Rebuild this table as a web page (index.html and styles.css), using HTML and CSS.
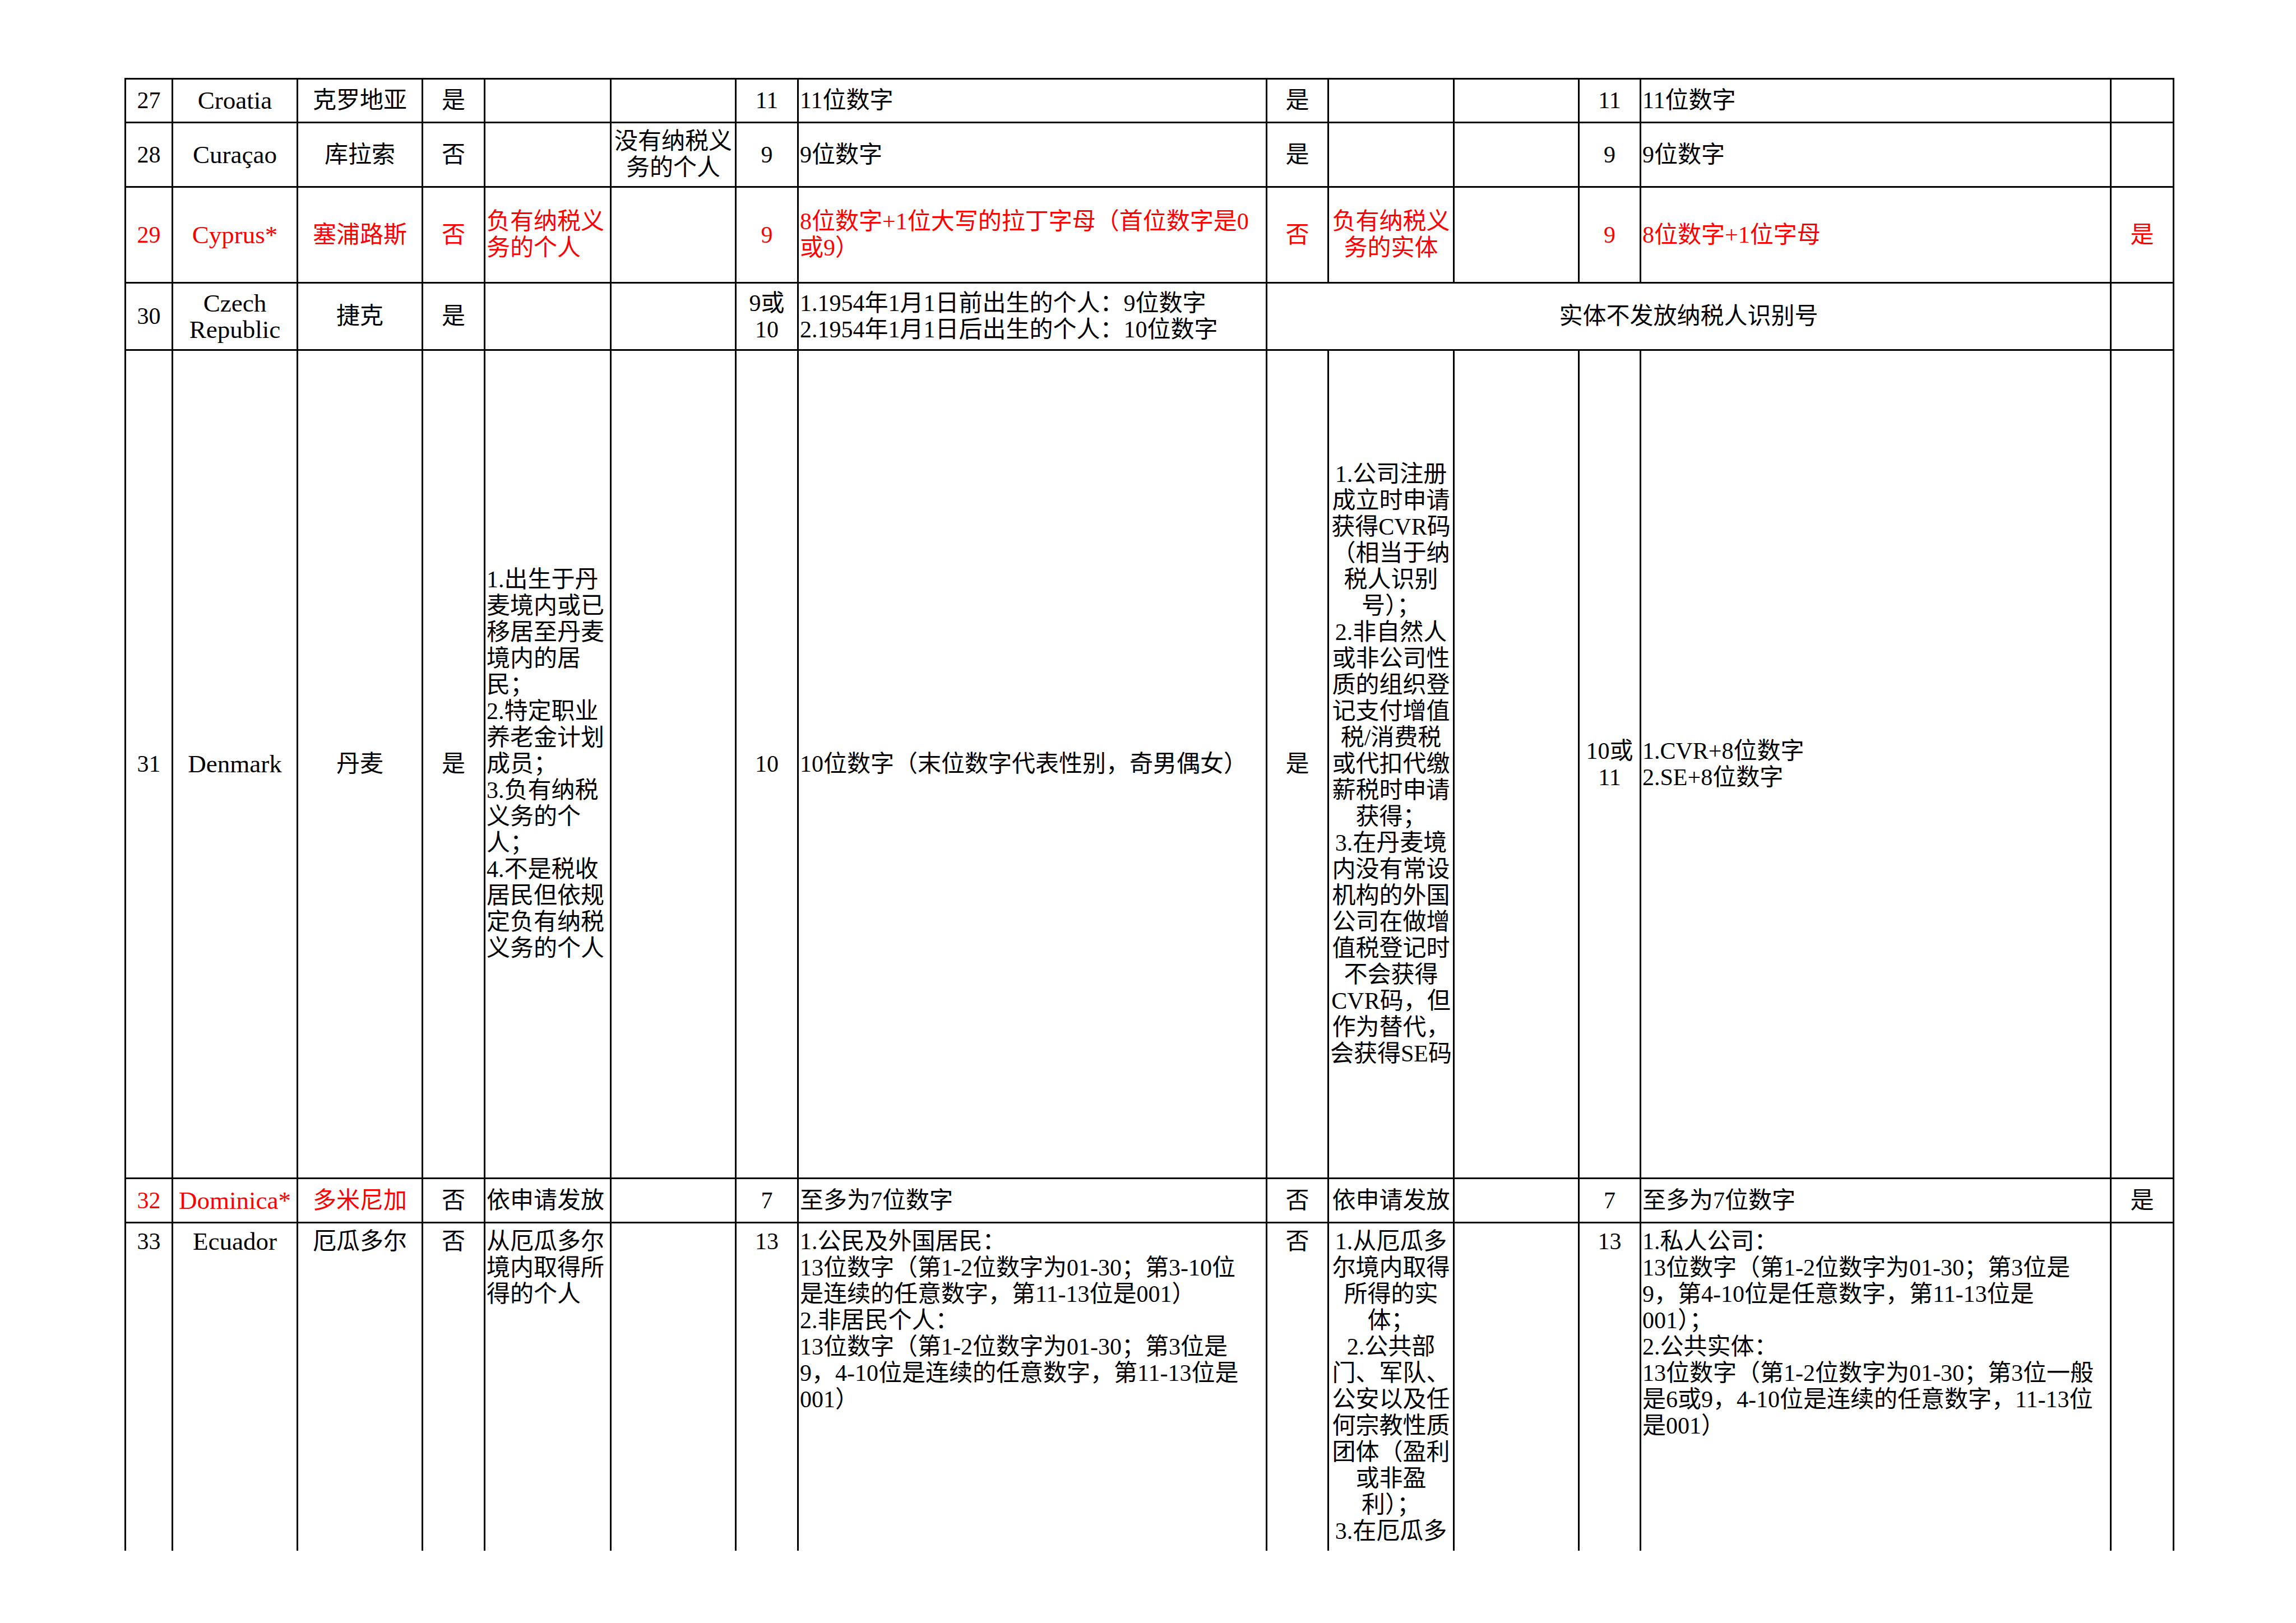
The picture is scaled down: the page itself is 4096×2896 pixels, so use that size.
FILE: index.html
```html
<!DOCTYPE html>
<html lang="zh-CN">
<head>
<meta charset="utf-8">
<title>纳税人识别号</title>
<link rel="stylesheet" href="styles.css">
</head>
<body>
<div class="page">
<table class="sheet">
<colgroup>
<col class="w-no"><col class="w-en"><col class="w-cn"><col class="w-yn"><col class="w-desc"><col class="w-desc2"><col class="w-len"><col class="w-fmt"><col class="w-yn2"><col class="w-desc3"><col class="w-desc4"><col class="w-len2"><col class="w-fmt2"><col class="w-end">
</colgroup>
<tbody>
<tr class="r27">
<td class="c">27</td><td class="c en">Croatia</td><td class="c">克罗地亚</td><td class="c">是</td><td></td><td></td><td class="c">11</td><td class="l">11位数字</td><td class="c">是</td><td></td><td></td><td class="c">11</td><td class="l">11位数字</td><td></td>
</tr>
<tr class="r28">
<td class="c">28</td><td class="c en">Curaçao</td><td class="c">库拉索</td><td class="c">否</td><td></td><td class="c">没有纳税义<br>务的个人</td><td class="c">9</td><td class="l">9位数字</td><td class="c">是</td><td></td><td></td><td class="c">9</td><td class="l">9位数字</td><td></td>
</tr>
<tr class="r29 red">
<td class="c">29</td><td class="c en">Cyprus*</td><td class="c">塞浦路斯</td><td class="c">否</td><td class="l">负有纳税义<br>务的个人</td><td></td><td class="c">9</td><td class="l">8位数字+1位大写的拉丁字母（首位数字是0<br>或9）</td><td class="c">否</td><td class="c">负有纳税义<br>务的实体</td><td></td><td class="c">9</td><td class="l">8位数字+1位字母</td><td class="c">是</td>
</tr>
<tr class="r30">
<td class="c">30</td><td class="c en">Czech<br>Republic</td><td class="c">捷克</td><td class="c">是</td><td></td><td></td><td class="c">9或<br>10</td><td class="l">1.1954年1月1日前出生的个人：9位数字<br>2.1954年1月1日后出生的个人：10位数字</td><td class="c" colspan="5">实体不发放纳税人识别号</td><td></td>
</tr>
<tr class="r31">
<td class="c">31</td><td class="c en">Denmark</td><td class="c">丹麦</td><td class="c">是</td>
<td class="l">1.出生于丹<br>麦境内或已<br>移居至丹麦<br>境内的居<br>民；<br>2.特定职业<br>养老金计划<br>成员；<br>3.负有纳税<br>义务的个<br>人；<br>4.不是税收<br>居民但依规<br>定负有纳税<br>义务的个人</td>
<td></td><td class="c">10</td><td class="l">10位数字（末位数字代表性别，奇男偶女）</td><td class="c">是</td>
<td class="c">1.公司注册<br>成立时申请<br>获得CVR码<br>（相当于纳<br>税人识别<br>号）；<br>2.非自然人<br>或非公司性<br>质的组织登<br>记支付增值<br>税/消费税<br>或代扣代缴<br>薪税时申请<br>获得；<br>3.在丹麦境<br>内没有常设<br>机构的外国<br>公司在做增<br>值税登记时<br>不会获得<br>CVR码，但<br>作为替代，<br>会获得SE码</td>
<td></td><td class="c">10或<br>11</td><td class="l">1.CVR+8位数字<br>2.SE+8位数字</td><td></td>
</tr>
<tr class="r32">
<td class="c red">32</td><td class="c red en">Dominica*</td><td class="c red">多米尼加</td><td class="c">否</td><td class="l">依申请发放</td><td></td><td class="c">7</td><td class="l">至多为7位数字</td><td class="c">否</td><td class="c">依申请发放</td><td></td><td class="c">7</td><td class="l">至多为7位数字</td><td class="c">是</td>
</tr>
<tr class="r33">
<td class="c">33</td><td class="c en">Ecuador</td><td class="c">厄瓜多尔</td><td class="c">否</td><td class="l">从厄瓜多尔<br>境内取得所<br>得的个人</td><td></td><td class="c">13</td>
<td class="l">1.公民及外国居民：<br>13位数字（第1-2位数字为01-30；第3-10位<br>是连续的任意数字，第11-13位是001）<br>2.非居民个人：<br>13位数字（第1-2位数字为01-30；第3位是<br>9，4-10位是连续的任意数字，第11-13位是<br>001）</td>
<td class="c">否</td>
<td class="c">1.从厄瓜多<br>尔境内取得<br>所得的实<br>体；<br>2.公共部<br>门、军队、<br>公安以及任<br>何宗教性质<br>团体（盈利<br>或非盈<br>利）；<br>3.在厄瓜多</td>
<td></td><td class="c">13</td>
<td class="l">1.私人公司：<br>13位数字（第1-2位数字为01-30；第3位是<br>9，第4-10位是任意数字，第11-13位是<br>001）；<br>2.公共实体：<br>13位数字（第1-2位数字为01-30；第3位一般<br>是6或9，4-10位是连续的任意数字，11-13位<br>是001）</td>
<td></td>
</tr>
</tbody>
</table>
</div>
</body>
</html>
```

FILE: styles.css
```css
html, body {
  margin: 0;
  padding: 0;
  background: #ffffff;
}

body {
  font-family: "Liberation Serif", "Noto Sans CJK SC", serif;
  font-size: 42px;
  line-height: 47px;
  color: #000000;
}

.page {
  padding: 139px 0 0 222px;
}

.sheet {
  border-collapse: collapse;
  table-layout: fixed;
  width: 3657px;
}

.sheet td {
  border: 3px solid #000000;
  padding: 0 2px;
  vertical-align: middle;
  white-space: nowrap;
  overflow: visible;
}

.w-no { width: 84px; }
.w-en { width: 223px; }
.w-cn { width: 223px; }
.w-yn { width: 111px; }
.w-desc { width: 225px; }
.w-desc2 { width: 223px; }
.w-len { width: 111px; }
.w-fmt { width: 836px; }
.w-yn2 { width: 110px; }
.w-desc3 { width: 224px; }
.w-desc4 { width: 223px; }
.w-len2 { width: 110px; }
.w-fmt2 { width: 839px; }
.w-end { width: 112px; }

.c { text-align: center; }
.l { text-align: left; }

.en { font-size: 45px; }

.red,
.red td { color: #ff0000; }

.r27 td { height: 75px; }
.r28 td { height: 112px; }
.r29 td { height: 168px; }
.r30 td { height: 117px; }
.r31 td { height: 1475px; }
.r32 td { height: 76px; }

.r33 td {
  height: 575px;
  vertical-align: top;
  padding-top: 9px;
  border-bottom: none;
}
```
